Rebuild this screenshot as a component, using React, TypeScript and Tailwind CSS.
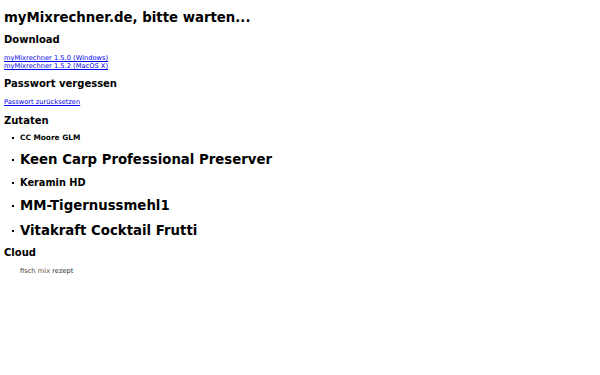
import React from "react";

export default function App() {
  const font = { fontFamily: '"DejaVu Sans", sans-serif' };
  return (
    <div className="w-[600px] h-[375px] bg-white text-black px-[4px] pt-[10px]" style={font}>
      <h1 className="font-bold text-[13.3px] leading-[16px]">myMixrechner.de, bitte warten...</h1>
      <h2 className="font-bold text-[10px] leading-[12px] mt-[8px]">Download</h2>
      <div className="mt-[8px] text-[6.7px] leading-[8px]">
        <div><a href="#" className="text-[#0000ee] underline">myMixrechner 1.5.0 (Windows)</a></div>
        <div><a href="#" className="text-[#0000ee] underline">myMixrechner 1.5.2 (MacOS X)</a></div>
      </div>
      <h2 className="font-bold text-[10px] leading-[12px] mt-[8px]">Passwort vergessen</h2>
      <div className="mt-[8px] text-[6.7px] leading-[8px]">
        <a href="#" className="text-[#0000ee] underline">Passwort zurücksetzen</a>
      </div>
      <h2 className="font-bold text-[10px] leading-[12px] mt-[9px]">Zutaten</h2>
      <ul className="font-bold pl-[8px]">
        <li className="flex items-center text-[7.4px] leading-[10px] mt-[6px]">
          <span className="w-[2px] h-[2px] bg-black mr-[6px]" />CC Moore GLM
        </li>
        <li className="flex items-center text-[13.3px] leading-[16px] mt-[9px]">
          <span className="w-[2px] h-[2px] bg-black mr-[6px]" />Keen Carp Professional Preserver
        </li>
        <li className="flex items-center text-[9.75px] leading-[12px] mt-[9px]">
          <span className="w-[2px] h-[2px] bg-black mr-[6px]" />Keramin HD
        </li>
        <li className="flex items-center text-[13.3px] leading-[16px] mt-[9px]">
          <span className="w-[2px] h-[2px] bg-black mr-[6px]" />MM-Tigernussmehl1
        </li>
        <li className="flex items-center text-[13.3px] leading-[16px] mt-[9px]">
          <span className="w-[2px] h-[2px] bg-black mr-[6px]" />Vitakraft Cocktail Frutti
        </li>
      </ul>
      <h2 className="font-bold text-[10px] leading-[12px] mt-[8px]">Cloud</h2>
      <div className="mt-[8px] pl-[16px] text-[6.7px] leading-[8px]">
        <span className="text-[#4a3a2a]">fisch</span>{" "}
        <span className="text-[#6a4a30]">mix</span>{" "}
        <span className="text-[#333333]">rezept</span>
      </div>
    </div>
  );
}
